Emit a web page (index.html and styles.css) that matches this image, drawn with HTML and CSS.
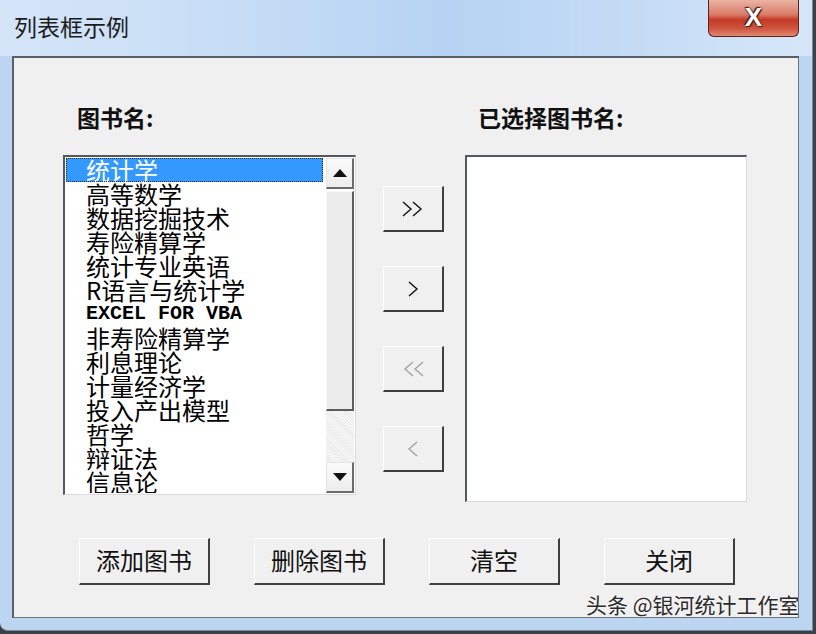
FILE: index.html
```html
<!DOCTYPE html>
<html>
  <head>
    <link rel="stylesheet" href="styles.css">
  </head>
  <body>
    <div class="window">
      <div class="titlebar">
        <span class="title">列表框示例</span>
        <div class="close-btn">X</div>
      </div>

      <div class="client">
        <div class="panes">
          <div class="left-col">
            <div class="label">图书名:</div>
            <div class="listbox listbox-left">
              <ul class="items">
                <li class="selected">统计学</li>
                <li>高等数学</li>
                <li>数据挖掘技术</li>
                <li>寿险精算学</li>
                <li>统计专业英语</li>
                <li>R语言与统计学</li>
                <li class="latin">EXCEL FOR VBA</li>
                <li>非寿险精算学</li>
                <li>利息理论</li>
                <li>计量经济学</li>
                <li>投入产出模型</li>
                <li>哲学</li>
                <li>辩证法</li>
                <li>信息论</li>
              </ul>
              <div class="scrollbar">
                <div class="sb-btn"><span class="tri-up"></span></div>
                <div class="sb-thumb"></div>
                <div class="sb-track"></div>
                <div class="sb-btn"><span class="tri-down"></span></div>
              </div>
            </div>
          </div>

          <div class="mid-col">
            <div class="move-btn">
              <svg width="24" height="18" viewBox="0 0 24 18"><polyline points="2,2 10,9 2,16" /><polyline points="12,2 20,9 12,16" /></svg>
            </div>
            <div class="move-btn">
              <svg width="24" height="18" viewBox="0 0 24 18"><polyline points="8,2 16,9 8,16" /></svg>
            </div>
            <div class="move-btn disabled">
              <svg width="24" height="18" viewBox="0 0 24 18"><polyline points="12,2 4,9 12,16" /><polyline points="22,2 14,9 22,16" /></svg>
            </div>
            <div class="move-btn disabled">
              <svg width="24" height="18" viewBox="0 0 24 18"><polyline points="16,2 8,9 16,16" /></svg>
            </div>
          </div>

          <div class="right-col">
            <div class="label label-right">已选择图书名:</div>
            <div class="listbox listbox-right"></div>
          </div>
        </div>

        <div class="actions">
          <div class="btn">添加图书</div>
          <div class="btn">删除图书</div>
          <div class="btn">清空</div>
          <div class="btn">关闭</div>
        </div>
      </div>

      <div class="watermark">头条 @银河统计工作室</div>
    </div>
  </body>
</html>
```

FILE: styles.css
```css
/* dialog window */
body {
  margin: 0;
  background-color: #3c4147;
  font-family: "Noto Sans CJK SC", "Noto Sans", sans-serif;
}

.window {
  position: relative;
  width: 812px;
  height: 630px;
  border-radius: 0 0 0 8px;
  background-color: #bcd6f1;
  border-right: 1px solid #7a8796;
  border-bottom: 1px solid #7a8796;
  overflow: hidden;
}

.titlebar {
  height: 56px;
  display: flex;
  justify-content: space-between;
  align-items: flex-start;
  background: linear-gradient(90deg, #d4e5f8 0%, #c9def6 25%, #b6d3f3 55%, #c6dcf5 80%, #d6e7f9 100%);
}

.title {
  margin: 8px 0 0 14px;
  font-size: 23px;
  line-height: 36px;
  color: #1c1c1c;
}

.close-btn {
  width: 89px;
  height: 36px;
  margin-right: 13px;
  border: 1px solid #5e2318;
  border-top: none;
  border-radius: 0 0 6px 6px;
  background: linear-gradient(#eab3a4 0%, #db7d69 40%, #c23a25 55%, #cf5640 80%, #e08a72 100%);
  color: #fff;
  font-family: "Liberation Sans", Arial, sans-serif;
  font-weight: bold;
  font-size: 26px;
  line-height: 34px;
  text-align: center;
  text-shadow: 0 0 2px #3a1a14, 1px 1px 1px #3a1a14, -1px -1px 1px #3a1a14;
}

.client {
  margin-left: 12px;
  padding-left: 49px;
  padding-top: 44px;
  box-sizing: border-box;
  width: 787px;
  height: 562px;
  background-color: #f0f0f0;
  border: 1px solid #6d737b;
  border-top: 2px solid #5b6068;
  border-left: 2px solid #5b6068;
}

.panes {
  display: flex;
  align-items: flex-start;
}

.label {
  height: 30px;
  line-height: 30px;
  margin-bottom: 23px;
  margin-left: 14px;
  font-size: 23px;
  font-weight: bold;
  color: #111;
}

.label-right {
  margin-left: 13px;
}

.listbox {
  box-sizing: border-box;
  background-color: #fff;
  border-top: 2px solid #55595f;
  border-left: 2px solid #55595f;
  border-right: 1px solid #dcdcdc;
  border-bottom: 1px solid #dcdcdc;
}

.listbox-left {
  width: 293px;
  height: 340px;
  display: flex;
  padding: 1px;
}

.listbox-right {
  width: 282px;
  height: 347px;
}

.items {
  flex: 1;
  list-style: none;
  margin: 0;
  padding: 0;
  overflow: hidden;
}

.items li {
  height: 24px;
  line-height: 24px;
  padding-left: 20px;
  font-size: 24px;
  color: #000;
  white-space: nowrap;
}

.items li.latin {
  font-family: "Liberation Mono", monospace;
  font-size: 20px;
  font-weight: bold;
}

.items li.selected {
  background-color: #3399ff;
  color: #fff;
  outline: 1px dotted #333;
  outline-offset: -1px;
  margin-right: 3px;
}

.scrollbar {
  width: 28px;
  display: flex;
  flex-direction: column;
}

.sb-btn {
  height: 31px;
  box-sizing: border-box;
  display: flex;
  align-items: center;
  justify-content: center;
  background: linear-gradient(#fafafa, #ececec);
  border-top: 1px solid #e4e4e4;
  border-left: 1px solid #e4e4e4;
  border-right: 2px solid #6a6a6a;
  border-bottom: 2px solid #6a6a6a;
}

.tri-up {
  width: 0;
  height: 0;
  border-left: 7px solid transparent;
  border-right: 7px solid transparent;
  border-bottom: 8px solid #111;
}

.tri-down {
  width: 0;
  height: 0;
  border-left: 7px solid transparent;
  border-right: 7px solid transparent;
  border-top: 8px solid #111;
}

.sb-thumb {
  height: 220px;
  margin-top: 2px;
  box-sizing: border-box;
  background-color: #ececec;
  border-top: 1px solid #f8f8f8;
  border-left: 1px solid #f8f8f8;
  border-right: 2px solid #5c5c5c;
  border-bottom: 2px solid #5c5c5c;
}

.sb-track {
  flex: 1;
  background-color: #f3f3f3;
  background-image: repeating-linear-gradient(45deg, #ececec 0 1px, #f7f7f7 1px 2px);
}

.mid-col {
  display: flex;
  flex-direction: column;
  gap: 34px;
  margin-top: 84px;
  margin-left: 27px;
}

.move-btn {
  width: 61px;
  height: 46px;
  box-sizing: border-box;
  display: flex;
  align-items: center;
  justify-content: center;
  background-color: #f0f0f0;
  border-top: 1px solid #fdfdfd;
  border-left: 1px solid #fdfdfd;
  border-right: 2px solid #3f3f3f;
  border-bottom: 2px solid #3f3f3f;
}

.move-btn svg polyline {
  fill: none;
  stroke: #111;
  stroke-width: 1.4;
}

.move-btn.disabled svg polyline {
  stroke: #a3a3a3;
}

.right-col {
  margin-left: 21px;
}

.actions {
  display: flex;
  gap: 44px;
  margin-top: 36px;
  margin-left: 16px;
}

.btn {
  width: 131px;
  height: 47px;
  box-sizing: border-box;
  background-color: #f0f0f0;
  border-top: 1px solid #fdfdfd;
  border-left: 1px solid #fdfdfd;
  border-right: 2px solid #3f3f3f;
  border-bottom: 2px solid #3f3f3f;
  font-size: 24px;
  line-height: 42px;
  text-align: center;
  color: #111;
}

.watermark {
  position: absolute;
  left: 586px;
  top: 590px;
  font-size: 21px;
  line-height: 28px;
  color: #2a2a2a;
  text-shadow: 0 0 2px #fff;
  white-space: nowrap;
}
```
